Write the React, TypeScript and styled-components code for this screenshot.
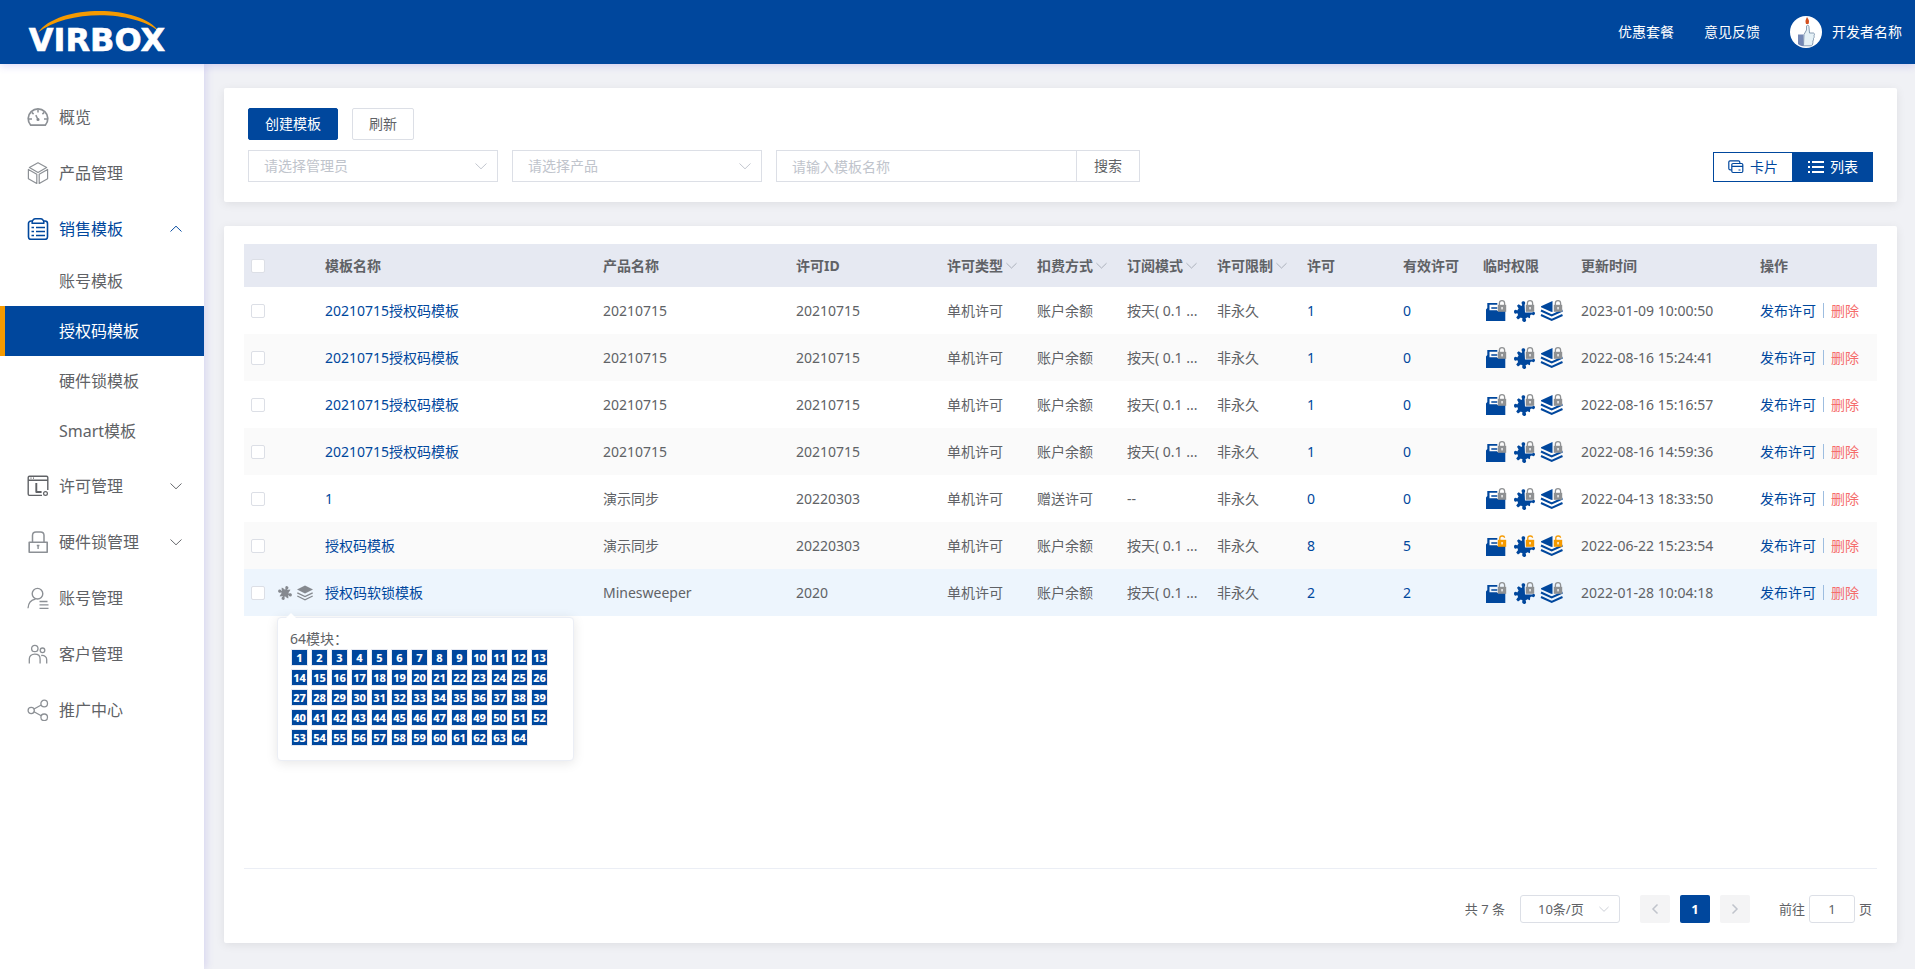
import React from "react";
import styled, { createGlobalStyle, css } from "styled-components";

const BLUE = "#00479d";
const TEXT = "#606266";
const LINE = "#dcdfe6";

const GlobalStyle = createGlobalStyle`
  *, *::before, *::after { box-sizing: border-box; }
  body {
    margin: 0;
    background: #f0f1f5;
    color: ${TEXT};
    font-family: "Noto Sans", "Noto Sans CJK SC", sans-serif;
    font-size: 14px;
    line-height: 20px;
  }
  button, input, select { font: inherit; color: inherit; margin: 0; }
  button { cursor: pointer; }
  a { color: inherit; text-decoration: none; }
  ul { margin: 0; padding: 0; list-style: none; }
  svg { display: block; flex: none; }
`;

/* ---------- frame ---------- */

const Page = styled.div`
  display: flex;
  flex-direction: column;
  min-height: 100vh;
`;

const Header = styled.header`
  position: relative;
  z-index: 2;
  display: flex;
  align-items: center;
  justify-content: space-between;
  height: 64px;
  padding: 0 13px 0 20px;
  background: ${BLUE};
  color: #fff;
  box-shadow: 0 2px 8px rgba(90, 70, 220, 0.2);
`;

const HeaderNav = styled.nav`
  display: flex;
  align-items: center;
  gap: 30px;
`;

const Account = styled.a`
  display: flex;
  align-items: center;
  gap: 10px;
`;

const Body = styled.div`
  display: flex;
  flex: 1;
`;

const Sidebar = styled.nav`
  position: relative;
  z-index: 1;
  flex: none;
  width: 204px;
  padding-top: 25px;
  background: #fff;
  box-shadow: 2px 0 8px rgba(90, 70, 220, 0.16);
`;

const Main = styled.main`
  display: flex;
  flex: 1;
  flex-direction: column;
  gap: 24px;
  min-width: 0;
  padding: 24px 18px 26px 20px;
`;

const Card = styled.section`
  background: #fff;
  border-radius: 2px;
  box-shadow: 0 2px 10px rgba(0, 0, 0, 0.08);
`;

/* ---------- sidebar ---------- */

const MenuLink = styled.a<{ $open?: boolean }>`
  display: flex;
  align-items: center;
  gap: 10px;
  height: 56px;
  padding: 0 22px 0 27px;
  font-size: 16px;
  color: ${(p) => (p.$open ? BLUE : TEXT)};
  & > span { flex: 1; }
`;

const SubMenu = styled.ul`
  margin: -1px 0 2px;
`;

const SubLink = styled.a<{ $active?: boolean }>`
  display: flex;
  align-items: center;
  height: 50px;
  padding-left: 54px;
  border-left: 5px solid transparent;
  font-size: 16px;
  ${(p) =>
    p.$active &&
    css`
      border-left-color: #f59a00;
      background: ${BLUE};
      color: #fff;
    `}
`;

/* ---------- toolbar ---------- */

const Toolbar = styled(Card)`
  display: flex;
  align-items: flex-end;
  justify-content: space-between;
  padding: 20px 24px;
`;

const ToolStack = styled.div`
  display: flex;
  flex-direction: column;
  gap: 10px;
`;

const ToolRow = styled.div`
  display: flex;
  gap: 14px;
`;

const Button = styled.button<{ $primary?: boolean }>`
  height: 32px;
  padding: 0 16px;
  border: 1px solid ${(p) => (p.$primary ? BLUE : LINE)};
  border-radius: 2px;
  background: ${(p) => (p.$primary ? BLUE : "#fff")};
  color: ${(p) => (p.$primary ? "#fff" : TEXT)};
`;

const SelectBox = styled.label<{ $width: number }>`
  display: grid;
  align-items: center;
  width: ${(p) => p.$width}px;
  & > * { grid-area: 1 / 1; }
  & > svg { justify-self: end; margin-right: 11px; pointer-events: none; }
`;

const Select = styled.select`
  width: 100%;
  height: 32px;
  padding: 0 30px 0 15px;
  appearance: none;
  border: 1px solid ${LINE};
  border-radius: 0;
  background: #fff;
  color: #c0c4cc;
`;

const Search = styled.form`
  display: flex;
`;

const SearchInput = styled.input`
  width: 300px;
  height: 32px;
  padding: 0 15px;
  border: 1px solid ${LINE};
  border-right: 0;
  border-radius: 0;
  background: #fff;
  &::placeholder { color: #c0c4cc; opacity: 1; }
`;

const SearchButton = styled.button`
  width: 64px;
  height: 32px;
  padding: 0;
  border: 1px solid ${LINE};
  background: #fff;
`;

const ViewSwitch = styled.div`
  display: flex;
`;

const ViewButton = styled.button<{ $active?: boolean }>`
  display: flex;
  align-items: center;
  justify-content: center;
  gap: 6px;
  width: 80px;
  height: 30px;
  padding: 0;
  border: 1px solid ${BLUE};
  background: ${(p) => (p.$active ? BLUE : "#fff")};
  color: ${(p) => (p.$active ? "#fff" : BLUE)};
`;

/* ---------- table ---------- */

const TableCard = styled(Card)`
  display: flex;
  flex: 1;
  flex-direction: column;
  padding: 18px 20px 20px;
`;

const TableArea = styled.div`
  flex: 1;
  border-bottom: 1px solid #ebeef5;
`;

const Table = styled.table`
  width: 100%;
  table-layout: fixed;
  border-collapse: collapse;
`;

const Th = styled.th`
  height: 43px;
  padding: 0 0 0 10px;
  background: #e6e9f2;
  text-align: left;
  font-weight: 700;
  white-space: nowrap;
`;

const Tr = styled.tr<{ $current?: boolean }>`
  &:nth-child(even) { background: #fafafa; }
  ${(p) =>
    p.$current &&
    css`
      background: #edf5fd;
    `}
`;

const Td = styled.td`
  height: 47px;
  padding: 0 0 0 10px;
  white-space: nowrap;
`;

const CheckTh = styled(Th)`
  padding-left: 7px;
`;

const CheckTd = styled(Td)`
  padding-left: 7px;
`;

const Check = styled.input`
  display: block;
  width: 14px;
  height: 14px;
  margin: 0;
  appearance: none;
  border: 1px solid ${LINE};
  border-radius: 2px;
  background: #fff;
`;

const FilterButton = styled.button`
  display: flex;
  align-items: center;
  gap: 3px;
  padding: 0;
  border: 0;
  background: none;
  font-weight: 700;
`;

const BlueLink = styled.a`
  color: ${BLUE};
`;

const Rights = styled.div`
  display: flex;
  gap: 4px;
`;

const ToolsTd = styled(Td)`
  padding-left: 7px;
`;

const Actions = styled.div`
  display: flex;
  align-items: center;
  gap: 7px;
`;

const TextButton = styled.button<{ $danger?: boolean }>`
  padding: 0;
  border: 0;
  background: none;
  color: ${(p) => (p.$danger ? "#f56c6c" : BLUE)};
`;

const Divider = styled.i`
  width: 1px;
  height: 15px;
  background: #9dbde0;
`;

const RowTools = styled.div`
  position: relative;
  display: flex;
  gap: 4px;
`;

const Popover = styled.div`
  position: absolute;
  top: 32px;
  left: 0;
  z-index: 3;
  width: 297px;
  padding: 11px 11px 14px 12px;
  border: 1px solid #ebeef5;
  border-radius: 4px;
  background: #fff;
  box-shadow: 0 2px 12px rgba(0, 0, 0, 0.1);
  &::before {
    content: "";
    position: absolute;
    top: -5px;
    left: 8px;
    border: 5px solid transparent;
    border-top: 0;
    border-bottom-color: #fff;
  }
`;

const ModuleGrid = styled.ul`
  display: grid;
  grid-template-columns: repeat(13, 17px);
  gap: 3px;
  padding-left: 1px;
`;

const ModuleBadge = styled.li`
  display: flex;
  justify-content: center;
  height: 17px;
  border: 1px solid #e6e9f2;
  background: ${BLUE};
  color: #fff;
  font-size: 11px;
  font-weight: 800;
  line-height: 15px;
`;

/* ---------- pagination ---------- */

const Pagination = styled.div`
  display: flex;
  align-items: center;
  justify-content: flex-end;
  padding: 26px 5px 0 0;
  font-size: 13px;
`;

const SizeSelect = styled(Select)`
  height: 28px;
  padding: 0 0 0 17px;
  border-radius: 3px;
  color: ${TEXT};
`;

const Pager = styled.nav`
  display: flex;
  gap: 10px;
  margin: 0 29px 0 20px;
`;

const PageButton = styled.button<{ $active?: boolean }>`
  display: flex;
  align-items: center;
  justify-content: center;
  width: 30px;
  height: 28px;
  padding: 0;
  border: 0;
  border-radius: 2px;
  background: ${(p) => (p.$active ? BLUE : "#f4f4f5")};
  color: ${(p) => (p.$active ? "#fff" : "#c0c4cc")};
  font-weight: ${(p) => (p.$active ? 700 : 400)};
`;

const Total = styled.span`
  margin-right: 15px;
`;

const Jump = styled.label`
  display: flex;
  align-items: center;
  gap: 4px;
`;

const JumpInput = styled.input`
  width: 46px;
  height: 28px;
  padding: 0;
  border: 1px solid ${LINE};
  border-radius: 3px;
  background: #fff;
  text-align: center;
`;

/* ---------- drawings ---------- */

function Chevron({ dir = "down", size = 12, color = "currentColor" }: { dir?: "down" | "up" | "left" | "right"; size?: number; color?: string }) {
  const d = {
    down: "M.5 3.500 6 8.800 11.500 3.500",
    up: "M.5 8.500 6 3.200 11.500 8.500",
    left: "M8.500 1.500 4 6 8.500 10.500",
    right: "M3.500 1.500 8 6 3.500 10.500",
  }[dir];
  const bold = dir === "left" || dir === "right";
  return (
    <svg width={size} height={size} viewBox="0 0 12 12" fill="none" stroke={color} strokeWidth={bold ? 1.5 : 0.95} aria-hidden="true">
      <path d={d} />
    </svg>
  );
}

function Logo() {
  return (
    <svg width="156" height="64" viewBox="0 0 156 64" role="img" aria-label="VIRBOX">
      <path d="M18 32.500C38 4 120 4 139 31.500C114 10 47 9 18 32.500Z" fill="#f59a00" />
      <text
        x="77"
        y="51"
        textAnchor="middle"
        fontFamily="'DejaVu Sans', sans-serif"
        fontWeight="700"
        fontSize="32"
        fill="#fff"
        stroke="#fff"
        strokeWidth="0.6"
      >
        VIRBOX
      </text>
    </svg>
  );
}

function Avatar() {
  return (
    <svg width="32" height="32" viewBox="0 0 32 32" aria-hidden="true">
      <circle cx="16" cy="16" r="16" fill="#fff" />
      <path d="M17 1c2 3 2.500 4 1.500 7h-2.500C15 5 15.500 4 17 1Z" fill="#d4501e" />
      <path d="M14 18.500 16.500 14V10c.5-1.200 2.200-1 2.400.3L19.500 17h4c1.200.3 1.200 2 .5 2.700.4 1 .2 2-.5 2.700.2 1 0 2-.6 2.600.2 2-.4 4.500-1.500 4.800h-7.900Z" fill="#e6f1f6" stroke="#7d93ab" strokeWidth="0.9" />
      <path d="M8 18.500h5.500v11.700C11 29.900 9 28.900 8 27.900Z" fill="#7487b4" />
    </svg>
  );
}

type MenuIconName = "gauge" | "box" | "clip" | "license" | "lock" | "user" | "users" | "share";

const menuDrawings: Record<MenuIconName, React.ReactNode> = {
  gauge: (
    <>
      <path d="M3.700 19.200A9.800 9.800 0 1 1 18.300 19.200Z" strokeWidth="1.700" />
      <path d="M8.800 9.200 11 13.500M11 3.500v3M4.800 6.400l1.800 1.700M17.200 6.400l-1.800 1.700M2 13h3M17 13h3" strokeWidth="1.500" />
      <circle cx="11" cy="13.500" r="1" fill="currentColor" />
    </>
  ),
  box: (
    <>
      <path d="M11 .8 19.600 5.600 11 10.400 2.400 5.600Z" />
      <path d="M1.400 7.400 9.800 12.200V21.500L1.400 16.800ZM20.600 7.400 12.200 12.200V21.500L20.600 16.800Z" />
    </>
  ),
  clip: (
    <>
      <path d="M5.500 3H4a2.500 2.500 0 0 0-2.500 2.500V19A2.500 2.500 0 0 0 4 21.400h14a2.500 2.500 0 0 0 2.500-2.400V5.500A2.500 2.500 0 0 0 18 3h-1.500" strokeWidth="1.600" />
      <path d="M5 5.200C5.300 2.500 7 .8 8.500.8h5C15 .8 16.700 2.500 17 5.200Z" strokeWidth="1.400" />
      <path d="M4.500 9.500h2.500M9 9.500h9M4.500 13.500h2.500M9 13.500h9M4.500 17.500h2.500M9 17.500h9" strokeWidth="1.500" />
    </>
  ),
  license: (
    <g stroke="#606266">
      <path d="M15 20.400H2.500A1.400 1.400 0 0 1 1.200 19V2.600A1.400 1.400 0 0 1 2.500 1.200h17a1.400 1.400 0 0 1 1.300 1.400V15M1.200 5.200h19.600" strokeWidth="1.400" />
      <path d="M3.500 3.200h1M6 3.200h1" />
      <path d="M9.300 8v9M8.600 17h6" strokeWidth="1.900" />
      <circle cx="18.500" cy="18.500" r="1.900" />
    </g>
  ),
  lock: (
    <>
      <path d="M2.200 11.200h18v10h-18Z" strokeWidth="1.600" />
      <path d="M5.500 11V4.500C5.500 2 7 .9 9 .9h4.500c2 0 3.500 1.100 3.500 3.600V11" strokeWidth="1.500" />
      <path d="M9.800 14.500h2.600M11.100 14.500v3.500" strokeWidth="1.400" />
    </>
  ),
  user: (
    <>
      <circle cx="10.500" cy="6.700" r="5.300" strokeWidth="1.400" />
      <path d="M1 21.300c.3-5.500 3.500-8.600 7.500-9.200M12.500 14.500h8M12.500 17.900h9M12.500 21.300h9" strokeWidth="1.300" />
    </>
  ),
  users: (
    <>
      <circle cx="7.800" cy="5.500" r="3.200" strokeWidth="1.300" />
      <circle cx="15.500" cy="7.300" r="2.300" strokeWidth="1.300" />
      <path d="M2.300 20.500V16c0-2.800 2-4.800 5.500-4.800s5.300 2 5.300 4.800v4.500M14.200 12.500c3.500-.4 5.500 1.500 5.500 4v4" strokeWidth="1.300" />
    </>
  ),
  share: (
    <>
      <circle cx="4.200" cy="11.500" r="3.100" strokeWidth="1.300" />
      <circle cx="17.200" cy="4.500" r="3.300" strokeWidth="1.300" />
      <circle cx="17.200" cy="18.300" r="3.300" strokeWidth="1.300" />
      <path d="M7 10 14.200 6M7 12.800 14.200 16.800" strokeWidth="1.300" />
    </>
  ),
};

function MenuIcon({ name }: { name: MenuIconName }) {
  return (
    <svg width="22" height="22" viewBox="0 0 22 22" fill="none" stroke={name === "clip" ? BLUE : "#8c9095"} strokeWidth="1.200" strokeLinejoin="round" aria-hidden="true">
      {menuDrawings[name]}
    </svg>
  );
}

function PuzzleShape() {
  return (
    <g transform="rotate(14 12 12)">
      <rect x="6.800" y="6.800" width="10.400" height="10.400" rx="0.8" />
      <circle cx="12.800" cy="3.600" r="2.400" />
      <circle cx="3.600" cy="11.200" r="2.400" />
      <circle cx="20.400" cy="12.800" r="2.400" />
      <circle cx="11.200" cy="20.400" r="2.400" />
      <path d="M11.400 4h2.800v4h-2.800ZM4 9.800h4v2.800H4ZM16 11.400h4v2.800h-4ZM9.800 16h2.800v4H9.800Z" />
      <path d="M5.400 5.200 9.600 6.600 8 9 5.600 8.200ZM18.800 5.400 17.400 9.600 15 8 15.800 5.600ZM18.600 18.800 14.400 17.400 16 15 18.400 15.800ZM5.200 18.600 6.600 14.400 9 16 8.200 18.400Z" />
    </g>
  );
}

function Padlock({ open }: { open?: boolean }) {
  const c = open ? "#f59a00" : "#8f9193";
  return (
    <g>
      <rect x="14.800" y="5.800" width="8.400" height="7" fill={c} />
      <path d={open ? "M16.800 6V4c.1-2.600 4.600-2.600 4.800-.3" : "M16.400 6V4c.1-3.300 5.100-3.300 5.200 0v2"} fill="none" stroke={c} strokeWidth="1.300" />
      <rect x="18.400" y="8" width="1.300" height="2.400" fill="#fff" />
    </g>
  );
}

type RightKind = "folder" | "puzzle" | "layers";

const rightLabels: Record<RightKind, string> = { folder: "数据", puzzle: "模块", layers: "版本" };

function RightIcon({ kind, open }: { kind: RightKind; open?: boolean }) {
  return (
    <svg width="24" height="24" viewBox="0 0 24 24" fill={BLUE} role="img" aria-label={rightLabels[kind]}>
      {kind === "folder" && (
        <path fillRule="evenodd" d="M3 10.500 4.300 9V4h10v8h8v10H3ZM6.500 5.800v5.400h7.800V9.700H8.300V8.200h6V5.800Z" />
      )}
      {kind === "puzzle" && (
        <path
          d="M12 2.200C14 2 14.800 3.600 13.600 5.800L14 13.400H21.300C22.500 11.900 24 12.800 24 14.300S22.500 16.800 21 15.600L19.300 15.900 18.900 19.300 16.400 18.200 14.500 19.600C15.800 21.500 14.900 22.900 13.200 22.900S10.600 21.500 11.600 19.500L9.900 18.400 7 20.400 5.200 18.500 7.100 15.900 6.200 14C4.600 15.300 3 14.500 3 12.700S4.600 10.200 6.200 11.400L7.600 9.500 6 6.800 7.700 5.200 10.400 6.900 11.300 6C10.100 4.200 10.500 2.400 12 2.200Z"
        />
      )}
      {kind === "layers" && (
        <>
          <path d="M13.500 2v11L12 12.800 2 8.200v-1Z" />
          <path d="M2 11.500 12.700 16.500 23.500 11.500M2 16 12.700 21 23.500 16" fill="none" stroke={BLUE} strokeWidth="2" />
        </>
      )}
      <Padlock open={open} />
    </svg>
  );
}

function SmallPuzzle() {
  return (
    <svg width="16" height="16" viewBox="0 0 24 24" fill="#85898f" aria-hidden="true">
      <PuzzleShape />
    </svg>
  );
}

function SmallLayers() {
  return (
    <svg width="16" height="16" viewBox="0 0 16 16" aria-hidden="true">
      <path d="M8 .5 16 4.500 8 8.500 0 4.500Z" fill="#85898f" />
      <path d="M.3 7.800 8 11.600 15.700 7.800M.3 11 8 14.800 15.700 11" fill="none" stroke="#85898f" strokeWidth="1.300" />
    </svg>
  );
}

function CardsIcon() {
  return (
    <svg width="16" height="14" viewBox="0 0 16 14" fill="none" stroke="currentColor" strokeWidth="1.200" aria-hidden="true">
      <path d="M3.500 9.800H2A1.300 1.300 0 0 1 .8 8.500V2A1.300 1.300 0 0 1 2 .8h8.500A1.300 1.300 0 0 1 11.800 2v1" />
      <rect x="3.800" y="3.500" width="11" height="9" rx="1.200" />
      <path d="M4 6.300h11M10.500 10h2" />
    </svg>
  );
}

function ListIcon() {
  return (
    <svg width="16" height="14" viewBox="0 0 16 14" fill="currentColor" aria-hidden="true">
      <path d="M0 1h2v2H0ZM4 1h12v2H4ZM0 6h2v2H0ZM4 6h12v2H4ZM0 11h2v2H0ZM4 11h12v2H4Z" />
    </svg>
  );
}

/* ---------- data ---------- */

interface MenuEntry {
  label: string;
  icon: MenuIconName;
  arrow?: "up" | "down";
  children?: string[];
}

const menu: MenuEntry[] = [
  { label: "概览", icon: "gauge" },
  { label: "产品管理", icon: "box" },
  { label: "销售模板", icon: "clip", arrow: "up", children: ["账号模板", "授权码模板", "硬件锁模板", "Smart模板"] },
  { label: "许可管理", icon: "license", arrow: "down" },
  { label: "硬件锁管理", icon: "lock", arrow: "down" },
  { label: "账号管理", icon: "user" },
  { label: "客户管理", icon: "users" },
  { label: "推广中心", icon: "share" },
];

const columns: { label: string; width: number; filter?: boolean }[] = [
  { label: "模板名称", width: 278 },
  { label: "产品名称", width: 193 },
  { label: "许可ID", width: 151 },
  { label: "许可类型", width: 90, filter: true },
  { label: "扣费方式", width: 90, filter: true },
  { label: "订阅模式", width: 90, filter: true },
  { label: "许可限制", width: 90, filter: true },
  { label: "许可", width: 96 },
  { label: "有效许可", width: 80 },
  { label: "临时权限", width: 98 },
  { label: "更新时间", width: 179 },
  { label: "操作", width: 127 },
];

interface Template {
  name: string;
  product: string;
  id: string;
  charge: string;
  mode: string;
  count: number;
  valid: number;
  time: string;
  unlocked?: boolean;
  current?: boolean;
}

const DAILY = "按天( 0.1 ...";

const templates: Template[] = [
  { name: "20210715授权码模板", product: "20210715", id: "20210715", charge: "账户余额", mode: DAILY, count: 1, valid: 0, time: "2023-01-09 10:00:50" },
  { name: "20210715授权码模板", product: "20210715", id: "20210715", charge: "账户余额", mode: DAILY, count: 1, valid: 0, time: "2022-08-16 15:24:41" },
  { name: "20210715授权码模板", product: "20210715", id: "20210715", charge: "账户余额", mode: DAILY, count: 1, valid: 0, time: "2022-08-16 15:16:57" },
  { name: "20210715授权码模板", product: "20210715", id: "20210715", charge: "账户余额", mode: DAILY, count: 1, valid: 0, time: "2022-08-16 14:59:36" },
  { name: "1", product: "演示同步", id: "20220303", charge: "赠送许可", mode: "--", count: 0, valid: 0, time: "2022-04-13 18:33:50" },
  { name: "授权码模板", product: "演示同步", id: "20220303", charge: "账户余额", mode: DAILY, count: 8, valid: 5, time: "2022-06-22 15:23:54", unlocked: true },
  { name: "授权码软锁模板", product: "Minesweeper", id: "2020", charge: "账户余额", mode: DAILY, count: 2, valid: 2, time: "2022-01-28 10:04:18", current: true },
];

const modules = Array.from({ length: 64 }, (_, i) => i + 1);

/* ---------- page ---------- */

function SideMenu() {
  return (
    <Sidebar>
      <ul>
        {menu.map((item) => (
          <li key={item.label}>
            <MenuLink href="#" $open={!!item.children}>
              <MenuIcon name={item.icon} />
              <span>{item.label}</span>
              {item.arrow && <Chevron dir={item.arrow} />}
            </MenuLink>
            {item.children && (
              <SubMenu>
                {item.children.map((label) => (
                  <li key={label}>
                    <SubLink href="#" $active={label === "授权码模板"}>
                      {label}
                    </SubLink>
                  </li>
                ))}
              </SubMenu>
            )}
          </li>
        ))}
      </ul>
    </Sidebar>
  );
}

function TemplateRow({ row }: { row: Template }) {
  return (
    <Tr $current={row.current}>
      <CheckTd>
        <Check type="checkbox" aria-label={row.name} />
      </CheckTd>
      <ToolsTd>
        {row.current && (
          <RowTools>
            <SmallPuzzle />
            <SmallLayers />
            <Popover>
              64模块：
              <ModuleGrid>
                {modules.map((n) => (
                  <ModuleBadge key={n}>{n}</ModuleBadge>
                ))}
              </ModuleGrid>
            </Popover>
          </RowTools>
        )}
      </ToolsTd>
      <Td>
        <BlueLink href="#">{row.name}</BlueLink>
      </Td>
      <Td>{row.product}</Td>
      <Td>{row.id}</Td>
      <Td>单机许可</Td>
      <Td>{row.charge}</Td>
      <Td>{row.mode}</Td>
      <Td>非永久</Td>
      <Td>
        <BlueLink href="#">{row.count}</BlueLink>
      </Td>
      <Td>
        <BlueLink href="#">{row.valid}</BlueLink>
      </Td>
      <Td>
        <Rights>
          <RightIcon kind="folder" open={row.unlocked} />
          <RightIcon kind="puzzle" open={row.unlocked} />
          <RightIcon kind="layers" open={row.unlocked} />
        </Rights>
      </Td>
      <Td>{row.time}</Td>
      <Td>
        <Actions>
          <TextButton type="button">发布许可</TextButton>
          <Divider />
          <TextButton type="button" $danger>
            删除
          </TextButton>
        </Actions>
      </Td>
    </Tr>
  );
}

export default function App() {
  return (
    <Page>
      <GlobalStyle />
      <Header>
        <Logo />
        <HeaderNav>
          <a href="#">优惠套餐</a>
          <a href="#">意见反馈</a>
          <Account href="#">
            <Avatar />
            开发者名称
          </Account>
        </HeaderNav>
      </Header>
      <Body>
        <SideMenu />
        <Main>
          <Toolbar>
            <ToolStack>
              <ToolRow>
                <Button type="button" $primary>
                  创建模板
                </Button>
                <Button type="button">刷新</Button>
              </ToolRow>
              <ToolRow>
                <SelectBox $width={250}>
                  <Select aria-label="请选择管理员">
                    <option>请选择管理员</option>
                  </Select>
                  <Chevron color="#c0c4cc" />
                </SelectBox>
                <SelectBox $width={250}>
                  <Select aria-label="请选择产品">
                    <option>请选择产品</option>
                  </Select>
                  <Chevron color="#c0c4cc" />
                </SelectBox>
                <Search>
                  <SearchInput type="text" placeholder="请输入模板名称" aria-label="请输入模板名称" />
                  <SearchButton type="button">搜索</SearchButton>
                </Search>
              </ToolRow>
            </ToolStack>
            <ViewSwitch>
              <ViewButton type="button">
                <CardsIcon />
                卡片
              </ViewButton>
              <ViewButton type="button" $active>
                <ListIcon />
                列表
              </ViewButton>
            </ViewSwitch>
          </Toolbar>

          <TableCard>
            <TableArea>
              <Table>
                <colgroup>
                  <col width={26} />
                  <col width={45} />
                  {columns.map((c) => (
                    <col key={c.label} width={c.width} />
                  ))}
                </colgroup>
                <thead>
                  <tr>
                    <CheckTh>
                      <Check type="checkbox" aria-label="全选" />
                    </CheckTh>
                    <Th />
                    {columns.map((c) => (
                      <Th key={c.label}>
                        {c.filter ? (
                          <FilterButton type="button">
                            {c.label}
                            <Chevron size={11} color="#a3a8b3" />
                          </FilterButton>
                        ) : (
                          c.label
                        )}
                      </Th>
                    ))}
                  </tr>
                </thead>
                <tbody>
                  {templates.map((row) => (
                    <TemplateRow key={row.time} row={row} />
                  ))}
                </tbody>
              </Table>
            </TableArea>
            <Pagination>
              <Total>共 7 条</Total>
              <SelectBox $width={100}>
                <SizeSelect aria-label="每页条数">
                  <option>10条/页</option>
                </SizeSelect>
                <Chevron size={10} color="#c0c4cc" />
              </SelectBox>
              <Pager>
                <PageButton type="button" aria-label="上一页">
                  <Chevron dir="left" />
                </PageButton>
                <PageButton type="button" $active>
                  1
                </PageButton>
                <PageButton type="button" aria-label="下一页">
                  <Chevron dir="right" />
                </PageButton>
              </Pager>
              <Jump>
                前往
                <JumpInput type="text" defaultValue="1" />
                页
              </Jump>
            </Pagination>
          </TableCard>
        </Main>
      </Body>
    </Page>
  );
}
